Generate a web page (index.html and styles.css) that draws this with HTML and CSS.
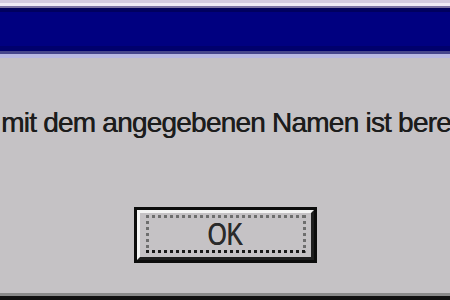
FILE: index.html
```html
<!DOCTYPE html>
<html lang="de">
<head>
<meta charset="utf-8">
<title>Dialog</title>
<link rel="stylesheet" href="styles.css">
</head>
<body>
<div class="dialog">
  <div class="titlebar"></div>
  <div class="content">
    <p class="message">mit dem angegebenen Namen ist bere</p>
    <div class="actions">
      <div class="btn">
        <div class="bevel">
          <div class="focus"><span class="label">OK</span></div>
        </div>
      </div>
    </div>
  </div>
  <div class="bottom-edge"></div>
</div>
</body>
</html>
```
FILE: styles.css
```css
html, body {
  margin: 0;
  padding: 0;
}
body {
  width: 450px;
  height: 300px;
  overflow: hidden;
  background: #c5c2c5;
  font-family: "Liberation Sans", Arial, sans-serif;
}
.dialog {
  display: flex;
  flex-direction: column;
  height: 300px;
}
.titlebar {
  height: 58px;
  flex: none;
  background: linear-gradient(to bottom,
    #d2cae0 0 3px,
    #eeeaf6 3px 6px,
    #7a72a4 6px 8px,
    #00005e 8px 12px,
    #000080 12px 46px,
    #00006c 46px 51px,
    #46468c 51px 54px,
    #b8b8e2 54px 58px);
}
.content {
  flex: 1;
  display: flex;
  flex-direction: column;
}
.message {
  margin: 49px 0 0 0;
  padding-left: 1px;
  font-size: 28px;
  line-height: 32px;
  letter-spacing: -0.78px;
  color: #1c1c1c;
  text-shadow: 0.5px 0 0 #1c1c1c;
  white-space: nowrap;
}
.actions {
  display: flex;
  justify-content: center;
  margin-top: 68px;
}
.btn {
  box-sizing: border-box;
  width: 183px;
  height: 56px;
  border: 3px solid #0c0c0c;
  display: flex;
}
.bevel {
  flex: 1;
  display: flex;
  border-top: 3px solid #f4f4f4;
  border-left: 3px solid #f4f4f4;
  border-right: 3px solid #1e1e1e;
  border-bottom: 3px solid #1e1e1e;
  background: #c5c2c5;
}
.focus {
  flex: 1;
  margin: 2px 5px 4px 6px;
  display: flex;
  align-items: center;
  justify-content: center;
  background:
    repeating-linear-gradient(90deg, #6e6e6e 0 3px, transparent 3px 6px) top left / 100% 3px no-repeat,
    repeating-linear-gradient(90deg, #1a1a1a 0 3px, transparent 3px 6px) bottom left / 100% 3px no-repeat,
    repeating-linear-gradient(180deg, #6e6e6e 0 3px, transparent 3px 6px) top left / 3px 100% no-repeat,
    repeating-linear-gradient(180deg, #6e6e6e 0 3px, transparent 3px 6px) top right / 3px 100% no-repeat;
}
.label {
  display: inline-block;
  font-size: 32px;
  line-height: 32px;
  color: #2a2a2a;
  text-shadow: 0.6px 0 0 #2a2a2a;
  transform: scaleX(0.76);
}
.bottom-edge {
  flex: none;
  height: 7px;
  background: linear-gradient(to bottom, #8a8a8a 0 3px, #111 3px 7px);
}
```
